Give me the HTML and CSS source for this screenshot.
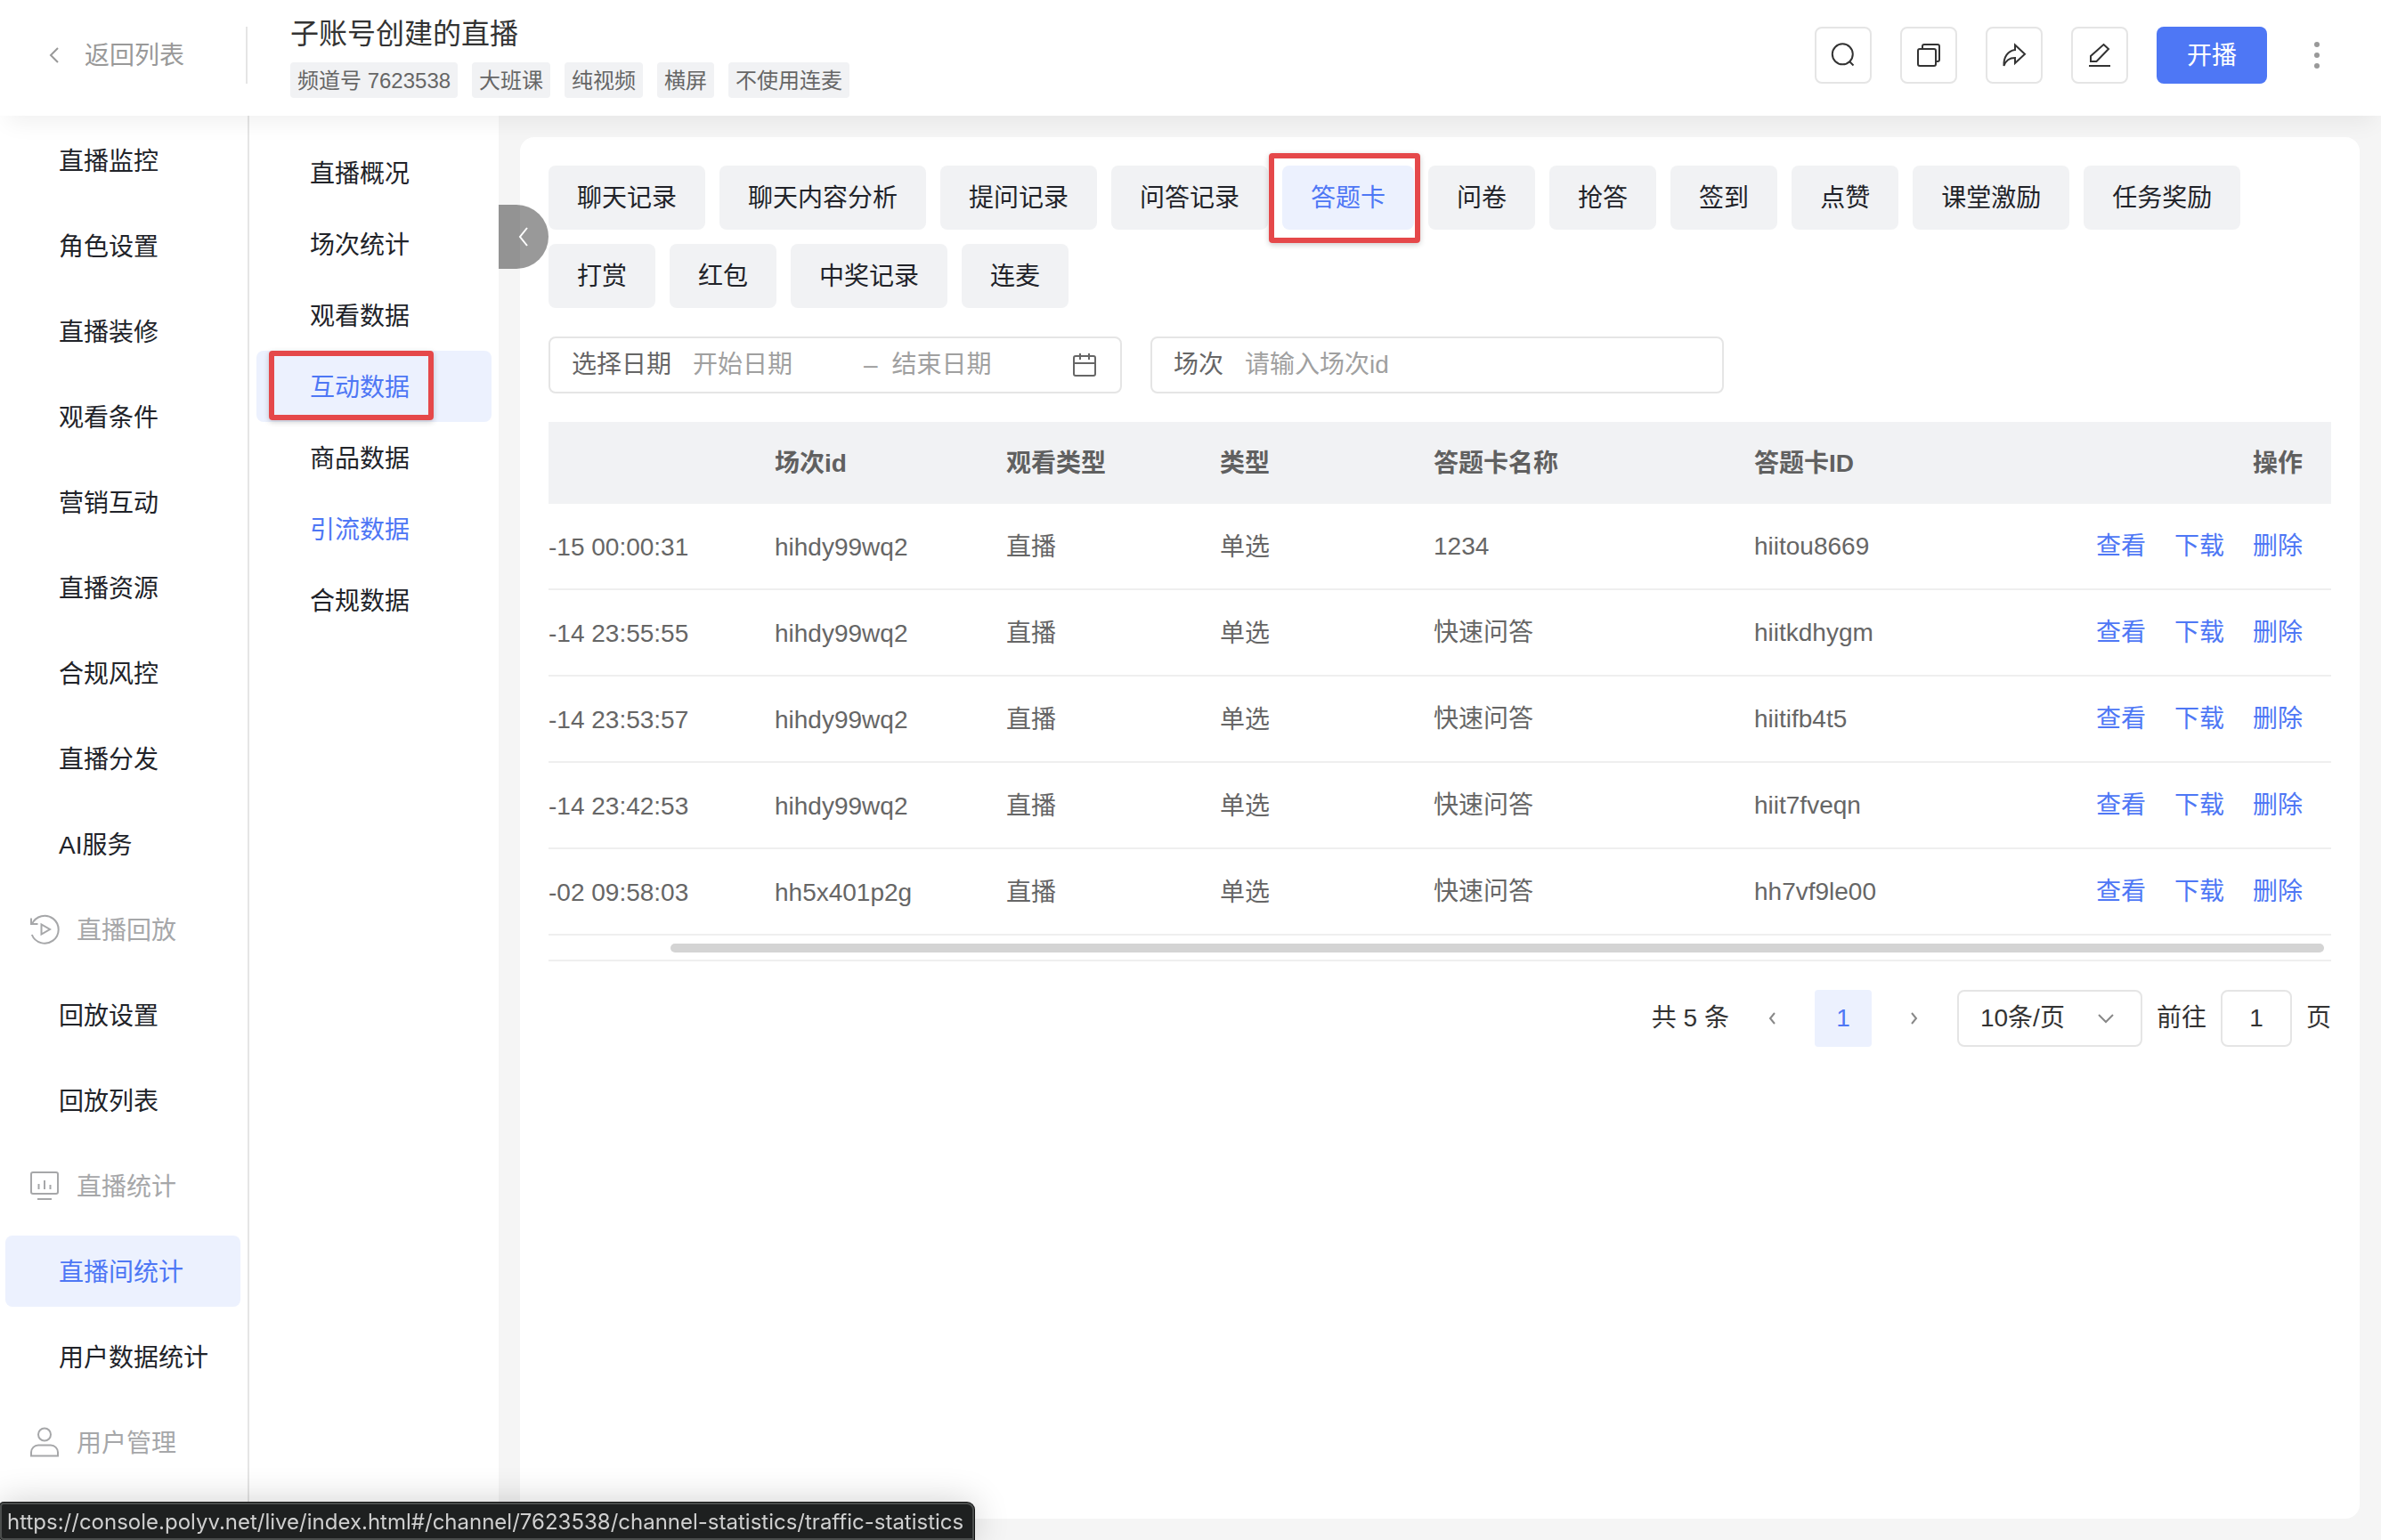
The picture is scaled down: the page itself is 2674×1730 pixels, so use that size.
FILE: index.html
```html
<!DOCTYPE html>
<html lang="zh-CN">
<head>
  <meta charset="UTF-8" />
  <meta name="viewport" content="width=device-width, initial-scale=1.0"/>
  <title>子账号创建的直播</title>
  <link rel="stylesheet" href="styles.css">
</head>
<body>
  <header class="header">
    <a class="back" href="#">
      <svg width="12" height="18" viewBox="0 0 12 18" fill="none" stroke="currentColor" stroke-width="2"><path d="M10 1L2 9l8 8"/></svg>
      <span>返回列表</span>
    </a>
    <div class="channel">
      <h1>子账号创建的直播</h1>
      <div class="tags">
        <span class="tag">频道号 7623538</span>
        <span class="tag">大班课</span>
        <span class="tag">纯视频</span>
        <span class="tag">横屏</span>
        <span class="tag">不使用连麦</span>
      </div>
    </div>
    <div class="actions">
      <button class="icon-btn" aria-label="搜索">
        <svg viewBox="0 0 32 32"><circle cx="15.3" cy="14.8" r="11.5"/><path d="M23 23l4.500 4.500"/></svg>
      </button>
      <button class="icon-btn" aria-label="复制">
        <svg viewBox="0 0 32 32"><rect x="4" y="9" width="20" height="19" rx="2"/><path d="M9 9V6a2 2 0 0 1 2-2h15a2 2 0 0 1 2 2v15a2 2 0 0 1-2 2h-2"/></svg>
      </button>
      <button class="icon-btn" aria-label="分享">
        <svg viewBox="0 0 32 32"><path d="M17 4.500L28 14.700 17 25V19C10 19 6.500 22 4.500 28 4 18 9 11 17 10z"/></svg>
      </button>
      <button class="icon-btn" aria-label="编辑">
        <svg viewBox="0 0 32 32"><path d="M4 28h24M20.500 4l5.500 5L12.500 23H6v-6z"/></svg>
      </button>
      <button class="start-btn">开播</button>
      <button class="more-btn" aria-label="更多">
        <svg width="8" height="32" viewBox="0 0 8 32" fill="currentColor"><circle cx="4" cy="4" r="3"/><circle cx="4" cy="16" r="3"/><circle cx="4" cy="28" r="3"/></svg>
      </button>
    </div>
  </header>

  <div class="layout">
    <nav class="sidebar">
      <a href="#">直播监控</a>
      <a href="#">角色设置</a>
      <a href="#">直播装修</a>
      <a href="#">观看条件</a>
      <a href="#">营销互动</a>
      <a href="#">直播资源</a>
      <a href="#">合规风控</a>
      <a href="#">直播分发</a>
      <a href="#">AI服务</a>
      <div class="group">
        <svg viewBox="0 0 40 40"><path d="M5.800 26a15.500 15.500 0 1 0 .2-12M5 7.500v6.500h7.500"/><path d="M16.500 14.500v11l9.500-5.500z"/></svg>
        <span>直播回放</span>
      </div>
      <a href="#">回放设置</a>
      <a href="#">回放列表</a>
      <div class="group">
        <svg viewBox="0 0 40 40"><rect x="5" y="5" width="30" height="24" rx="2"/><path d="M12 35h16M13.500 18v6M20 14v10M26.500 19v5"/></svg>
        <span>直播统计</span>
      </div>
      <a href="#" class="active">直播间统计</a>
      <a href="#">用户数据统计</a>
      <div class="group">
        <svg viewBox="0 0 40 40"><circle cx="20" cy="11.500" r="7"/><path d="M5 35.500v-4a8 8 0 0 1 8-8h14a8 8 0 0 1 8 8v4z"/></svg>
        <span>用户管理</span>
      </div>
    </nav>

    <nav class="submenu">
      <a href="#">直播概况</a>
      <a href="#">场次统计</a>
      <a href="#">观看数据</a>
      <a href="#" class="active">互动数据</a>
      <a href="#">商品数据</a>
      <a href="#" class="hover">引流数据</a>
      <a href="#">合规数据</a>
    </nav>

    <main class="content">
      <button class="collapse" aria-label="收起">
        <svg width="12" height="22" viewBox="0 0 12 22" fill="none" stroke="currentColor" stroke-width="2"><path d="M10 1L2 11l8 10"/></svg>
      </button>

      <section class="panel">
        <div class="tabs">
          <button>聊天记录</button>
          <button>聊天内容分析</button>
          <button>提问记录</button>
          <button>问答记录</button>
          <button class="active">答题卡</button>
          <button>问卷</button>
          <button>抢答</button>
          <button>签到</button>
          <button>点赞</button>
          <button>课堂激励</button>
          <button>任务奖励</button>
          <button>打赏</button>
          <button>红包</button>
          <button>中奖记录</button>
          <button>连麦</button>
        </div>

        <form class="filters">
          <div class="field">
            <label for="startDate">选择日期</label>
            <input class="start" type="text" id="startDate" placeholder="开始日期" />
            <span class="dash">–</span>
            <input type="text" id="endDate" placeholder="结束日期" aria-label="结束日期" />
            <svg width="32" height="32" viewBox="0 0 32 32" fill="none" stroke="currentColor" stroke-width="2"><rect x="4" y="6" width="24" height="22" rx="2"/><path d="M4 14h24M11 3v7M21 3v7"/></svg>
          </div>
          <div class="field">
            <label for="session">场次</label>
            <input type="text" id="session" placeholder="请输入场次id" />
          </div>
        </form>

        <table class="records">
          <colgroup>
            <col class="c-time"><col class="c-session"><col class="c-type"><col class="c-type"><col class="c-name"><col><col>
          </colgroup>
          <thead>
            <tr><th></th><th>场次id</th><th>观看类型</th><th>类型</th><th>答题卡名称</th><th>答题卡ID</th><th class="ops">操作</th></tr>
          </thead>
          <tbody>
            <tr><td>-15 00:00:31</td><td>hihdy99wq2</td><td>直播</td><td>单选</td><td>1234</td><td>hiitou8669</td><td class="ops"><a href="#">查看</a><a href="#">下载</a><a href="#">删除</a></td></tr>
            <tr><td>-14 23:55:55</td><td>hihdy99wq2</td><td>直播</td><td>单选</td><td>快速问答</td><td>hiitkdhygm</td><td class="ops"><a href="#">查看</a><a href="#">下载</a><a href="#">删除</a></td></tr>
            <tr><td>-14 23:53:57</td><td>hihdy99wq2</td><td>直播</td><td>单选</td><td>快速问答</td><td>hiitifb4t5</td><td class="ops"><a href="#">查看</a><a href="#">下载</a><a href="#">删除</a></td></tr>
            <tr><td>-14 23:42:53</td><td>hihdy99wq2</td><td>直播</td><td>单选</td><td>快速问答</td><td>hiit7fveqn</td><td class="ops"><a href="#">查看</a><a href="#">下载</a><a href="#">删除</a></td></tr>
            <tr><td>-02 09:58:03</td><td>hh5x401p2g</td><td>直播</td><td>单选</td><td>快速问答</td><td>hh7vf9le00</td><td class="ops"><a href="#">查看</a><a href="#">下载</a><a href="#">删除</a></td></tr>
          </tbody>
        </table>
        <div class="scrollbar"><div class="thumb"></div></div>

        <div class="pagination">
          <span>共 5 条</span>
          <button aria-label="上一页"><svg width="8" height="14" viewBox="0 0 8 14"><path d="M7 1L2 7l5 6"/></svg></button>
          <button class="active">1</button>
          <button aria-label="下一页"><svg width="8" height="14" viewBox="0 0 8 14"><path d="M1 1l5 6-5 6"/></svg></button>
          <div class="select">
            <select aria-label="每页条数"><option>10条/页</option></select>
            <svg width="18" height="12" viewBox="0 0 18 12"><path d="M1 2l8 8 8-8"/></svg>
          </div>
          <label for="jump">前往</label>
          <input type="text" id="jump" value="1" />
          <span>页</span>
        </div>
      </section>
    </main>
  </div>

  <div class="status-bar">https://console.polyv.net/live/index.html#/channel/7623538/channel-statistics/traffic-statistics</div>
</body>
</html>
```
FILE: styles.css
```css
*, *::before, *::after {
  box-sizing: border-box;
}

body {
  display: flex;
  flex-direction: column;
  min-height: 100vh;
  margin: 0;
  background: #f5f5f5;
  color: #212329;
  font-family: "Liberation Sans", "Noto Sans CJK SC", sans-serif;
  font-size: 28px;
  line-height: 40px;
}

a {
  color: inherit;
  text-decoration: none;
}

button, input, select {
  font: inherit;
  color: inherit;
  padding: 0;
  border: none;
  background: none;
  outline: none;
}

button {
  cursor: pointer;
}

svg {
  display: block;
}

/* header */
.header {
  position: relative;
  z-index: 2;
  display: flex;
  height: 130px;
  padding-right: 48px;
  background: #fff;
  box-shadow: 0 16px 24px -8px rgba(0,0,0,0.06);
}

.back {
  display: flex;
  align-items: center;
  gap: 28px;
  width: 278px;
  height: 64px;
  margin-top: 30px;
  padding-left: 55px;
  border-right: 2px solid #e5e5e5;
  color: #999;
}

.back span, .group span {
  padding-top: 2px;
}

.channel {
  padding: 16px 0 0 48px;
}

.channel h1 {
  margin: 0 0 10px;
  color: #333;
  font-size: 32px;
  font-weight: 400;
  line-height: 44px;
}

.tags {
  display: flex;
  gap: 16px;
}

.tag {
  height: 40px;
  padding: 0 8px;
  border-radius: 4px;
  background: #f1f2f4;
  color: #666;
  font-size: 24px;
  line-height: 42px;
}

.actions {
  display: flex;
  gap: 32px;
  margin: 30px 0 0 auto;
}

.icon-btn {
  display: flex;
  align-items: center;
  justify-content: center;
  width: 64px;
  height: 64px;
  border: 2px solid #e5e5e5;
  border-radius: 8px;
}

.icon-btn svg {
  width: 32px;
  height: 32px;
  fill: none;
  stroke: #333;
  stroke-width: 2;
}

.start-btn {
  width: 124px;
  height: 64px;
  padding-top: 2px;
  border-radius: 8px;
  background: #4e77f5;
  color: #fff;
}

.more-btn {
  display: flex;
  align-items: center;
  justify-content: center;
  width: 48px;
  height: 64px;
  color: #999;
}

/* menus */
.layout {
  display: flex;
  flex: 1;
}

.sidebar {
  display: flex;
  flex-direction: column;
  gap: 16px;
  width: 280px;
  padding: 10px 8px 10px 6px;
  border-right: 2px solid #e5e5e5;
  background: #fff;
}

.sidebar a, .submenu a {
  height: 80px;
  padding: 22px 0 0 60px;
  border-radius: 8px;
}

.sidebar .active, .submenu .active {
  background: #ecf1fe;
  color: #4e77f5;
}

.group {
  display: flex;
  gap: 16px;
  height: 80px;
  padding: 20px 0 0 24px;
  color: #a6a7a9;
}

.group svg {
  width: 40px;
  height: 40px;
  fill: none;
  stroke: currentColor;
  stroke-width: 2;
}

.submenu {
  display: flex;
  flex-direction: column;
  width: 280px;
  padding: 24px 8px;
  background: #fff;
}

.submenu .hover {
  color: #4e77f5;
}

/* red highlight frames */
.submenu .active, .tabs .active {
  position: relative;
}

.submenu .active::after, .tabs .active::after {
  content: "";
  position: absolute;
  border: 6px solid #e5484a;
  border-radius: 4px;
  box-shadow: 0 2px 6px rgba(0,0,0,0.2);
}

.submenu .active::after {
  top: 0;
  left: 14px;
  width: 185px;
  height: 78px;
}

.tabs .active::after {
  inset: -14px -7px -15px -15px;
}

/* content */
.content {
  position: relative;
  display: flex;
  flex: 1;
  padding: 24px;
}

.collapse {
  position: absolute;
  top: 100px;
  left: 0;
  display: flex;
  align-items: center;
  justify-content: center;
  width: 56px;
  height: 72px;
  border-radius: 0 36px 36px 0;
  background: rgba(0,0,0,0.4);
  color: #fff;
}

.panel {
  flex: 1;
  padding: 32px;
  border-radius: 16px;
  background: #fff;
}

.tabs {
  display: flex;
  flex-wrap: wrap;
  gap: 16px;
}

.tabs button {
  height: 72px;
  padding: 2px 32px 0;
  border-radius: 8px;
  background: #f1f2f4;
}

.tabs .active {
  background: #ecf1fe;
  color: #4e77f5;
}

.filters {
  display: flex;
  gap: 32px;
  margin: 32px 0;
}

.field {
  display: flex;
  align-items: center;
  flex: 0 1 644px;
  min-width: 0;
  height: 64px;
  padding: 0 24px;
  border: 2px solid #e5e5e5;
  border-radius: 8px;
  color: #666;
}

.field label {
  flex: none;
  margin-right: 24px;
}

.field input {
  flex: 1;
  min-width: 0;
}

.field .start {
  flex: 0 1 176px;
}

.field .dash {
  margin: 0 16px;
  color: #999;
}

.field svg {
  flex: none;
}

input::placeholder {
  color: #a0a0a0;
  opacity: 1;
}

/* table */
.records {
  width: 100%;
  border-collapse: separate;
  border-spacing: 0;
  table-layout: fixed;
  color: #666;
}

.c-time {
  width: 222px;
}

.c-session {
  width: 260px;
}

.c-type {
  width: 240px;
}

.c-name {
  width: 360px;
}

.records th {
  height: 92px;
  padding: 2px 32px 0;
  background: #f1f2f4;
  color: #606060;
  font-weight: 700;
  text-align: left;
}

.records td {
  height: 97px;
  padding: 0 32px;
  border-bottom: 2px solid #efefef;
}

.records td:nth-child(-n+4) {
  padding-top: 3px;
}

.records td:first-child {
  padding-left: 0;
}

.records .ops {
  text-align: right;
}

.ops a {
  margin-left: 32px;
  color: #4e77f5;
}

.scrollbar {
  padding: 9px 8px 8px 137px;
  border-bottom: 2px solid #efefef;
}

.thumb {
  height: 10px;
  border-radius: 5px;
  background: #d4d4d4;
}

/* pagination */
.pagination {
  display: flex;
  align-items: center;
  justify-content: flex-end;
  gap: 16px;
  margin-top: 32px;
  color: #333;
}

.pagination button {
  display: flex;
  align-items: center;
  justify-content: center;
  width: 64px;
  height: 64px;
  border-radius: 4px;
}

.pagination .active {
  background: #ecf1fe;
  color: #4e77f5;
}

.pagination svg {
  fill: none;
  stroke: #888;
  stroke-width: 2;
}

.pagination input, .select select {
  height: 64px;
  border: 2px solid #e5e5e5;
  border-radius: 8px;
}

.pagination input {
  width: 80px;
  text-align: center;
}

.select {
  position: relative;
}

.select select {
  width: 208px;
  padding-left: 24px;
  appearance: none;
}

.select svg {
  position: absolute;
  top: 26px;
  right: 32px;
  pointer-events: none;
}

.status-bar {
  position: fixed;
  bottom: 0;
  left: 0;
  z-index: 3;
  height: 42px;
  padding: 0 10px 0 6px;
  border: 2px solid #4b4e4d;
  border-radius: 4px 8px 0 4px;
  background: #1e2020;
  box-shadow: 0 0 0 1px #111, 0 0 40px rgba(0,0,0,0.2);
  color: #cfcfcf;
  font-family: Inter, sans-serif;
  font-size: 24px;
  line-height: 40px;
}
```
